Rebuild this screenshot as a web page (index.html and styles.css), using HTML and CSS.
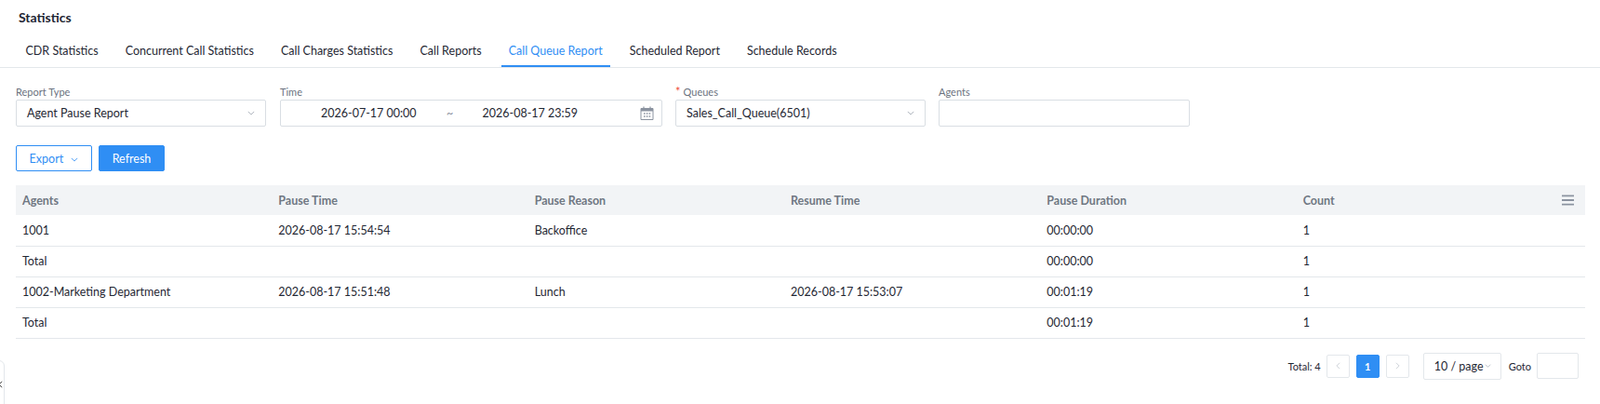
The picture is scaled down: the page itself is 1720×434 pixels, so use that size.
FILE: index.html
```html
<!DOCTYPE html>
<html lang="en">
<head>
  <meta charset="UTF-8">
  <title>Statistics</title>
  <link rel="stylesheet" href="styles.css">
</head>
<body>
  <h1 class="title">Statistics</h1>

  <nav class="tabs">
    <a class="tab">CDR Statistics</a>
    <a class="tab">Concurrent Call Statistics</a>
    <a class="tab">Call Charges Statistics</a>
    <a class="tab">Call Reports</a>
    <a class="tab active">Call Queue Report</a>
    <a class="tab">Scheduled Report</a>
    <a class="tab">Schedule Records</a>
  </nav>

  <main class="content">
    <div class="filters">
      <div class="field w-type">
        <label class="field-label">Report Type</label>
        <div class="control">
          <span class="value">Agent Pause Report</span>
          <svg class="caret" viewBox="0 0 10 6"><path d="M1 1l4 4 4-4"/></svg>
        </div>
      </div>
      <div class="field w-time">
        <label class="field-label">Time</label>
        <div class="control control-time">
          <span class="date">2026-07-17 00:00</span>
          <span class="tilde">~</span>
          <span class="date">2026-08-17 23:59</span>
          <svg class="calendar" viewBox="0 0 15 15">
            <path class="cal-body" d="M1 2.5h13v12h-13z"/>
            <path class="cal-top" d="M1 2.5h13v3h-13z"/>
            <path class="cal-pins" d="M4 0.5v3M11 0.5v3"/>
            <path class="cal-dots" d="M4 8h1.6M6.8 8h1.6M9.6 8h1.6M4 11h1.6M6.8 11h1.6M9.6 11h1.6"/>
          </svg>
        </div>
      </div>
      <div class="field w-queue">
        <label class="field-label"><span class="required">*</span>Queues</label>
        <div class="control">
          <span class="value">Sales_Call_Queue(6501)</span>
          <svg class="caret" viewBox="0 0 10 6"><path d="M1 1l4 4 4-4"/></svg>
        </div>
      </div>
      <div class="field w-agents">
        <label class="field-label">Agents</label>
        <div class="control"></div>
      </div>
    </div>

    <div class="actions">
      <button class="btn btn-outline">Export
        <svg class="caret caret-blue" viewBox="0 0 10 6"><path d="M1 1l4 4 4-4"/></svg>
      </button>
      <button class="btn btn-primary">Refresh</button>
    </div>

    <table class="report">
      <thead>
        <tr>
          <th>Agents</th>
          <th>Pause Time</th>
          <th>Pause Reason</th>
          <th>Resume Time</th>
          <th>Pause Duration</th>
          <th>Count</th>
          <th class="col-menu">
            <svg class="menu-icon" viewBox="0 0 14 12"><path d="M0 1h14M0 6h14M0 11h14"/></svg>
          </th>
        </tr>
      </thead>
      <tbody>
        <tr><td>1001</td><td>2026-08-17 15:54:54</td><td>Backoffice</td><td></td><td>00:00:00</td><td>1</td><td></td></tr>
        <tr><td>Total</td><td></td><td></td><td></td><td>00:00:00</td><td>1</td><td></td></tr>
        <tr><td>1002-Marketing Department</td><td>2026-08-17 15:51:48</td><td>Lunch</td><td>2026-08-17 15:53:07</td><td>00:01:19</td><td>1</td><td></td></tr>
        <tr><td>Total</td><td></td><td></td><td></td><td>00:01:19</td><td>1</td><td></td></tr>
      </tbody>
    </table>

    <div class="pagination">
      <span class="total">Total: 4</span>
      <span class="page-btn"><svg class="page-arrow" viewBox="0 0 6 10"><path d="M5 1L1 5l4 4"/></svg></span>
      <span class="page-btn current">1</span>
      <span class="page-btn"><svg class="page-arrow" viewBox="0 0 6 10"><path d="M1 1l4 4-4 4"/></svg></span>
      <span class="page-size">10 / page<svg class="caret caret-small" viewBox="0 0 10 6"><path d="M1 1l4 4 4-4"/></svg></span>
      <span class="goto">Goto</span>
      <span class="goto-input"></span>
    </div>
  </main>

  <div class="side-handle">
    <svg viewBox="0 0 6 10"><path d="M5 1L1 5l4 4"/></svg>
  </div>
</body>
</html>
```

FILE: styles.css
```css
html, body {
  height: 100%;
}

body {
  margin: 0;
  overflow: hidden;
  font-family: Lato, "Noto Sans", sans-serif;
  font-size: 12.5px;
  color: #1f2733;
  background-color: #fff;
}

.title {
  margin: 0;
  padding: 11px 20px 0;
  font-size: 14px;
  line-height: 16px;
  font-weight: 700;
}

.tabs {
  display: flex;
  gap: 13px;
  margin-top: 13px;
  padding-left: 19.5px;
  box-sizing: border-box;
  height: 33px;
  border-bottom: 1px solid #e3e7eb;
}

.tab {
  padding: 0 8px;
  line-height: 29px;
  height: 32px;
  box-sizing: border-box;
}

.tab.active {
  color: #2f8ef4;
  border-bottom: 2px solid #2f8ef4;
}

.content {
  padding: 0 16px 0 17px;
}

.filters {
  display: flex;
  gap: 14px;
  margin-top: 17px;
}

.field-label {
  display: block;
  height: 17px;
  font-size: 11px;
  line-height: 17px;
  color: #6b7280;
}

.required {
  color: #f0513c;
  font-size: 13px;
  margin-right: 3px;
}

.w-type { width: 270px; }
.w-time { width: 411px; }
.w-queue { width: 269px; }
.w-agents { width: 270px; }

.control {
  display: flex;
  align-items: center;
  justify-content: space-between;
  box-sizing: border-box;
  height: 29px;
  padding: 0 11px;
  border: 1px solid #d9dee3;
  border-radius: 2px;
}

.w-type .control {
  width: 269px;
}

.control-time {
  justify-content: flex-start;
  padding-left: 43px;
}

.date {
  width: 115px;
}

.tilde {
  width: 58.5px;
  padding-left: 20px;
  box-sizing: border-box;
  color: #8b93a0;
}

.caret {
  width: 8px;
  height: 5px;
  fill: none;
  stroke: #9aa2ad;
  stroke-width: 1;
}

.caret-blue {
  stroke: #2f8ef4;
  margin-left: 5px;
  vertical-align: 1px;
}

.calendar {
  width: 15px;
  height: 15px;
  margin-left: auto;
  margin-right: -3px;
  fill: none;
}

.cal-body {
  stroke: #8b93a0;
  stroke-width: 1;
}

.cal-top {
  fill: #8b93a0;
}

.cal-pins {
  stroke: #8b93a0;
  stroke-width: 1.2;
}

.cal-dots {
  stroke: #8b93a0;
  stroke-width: 1.4;
}

.actions {
  display: flex;
  gap: 7px;
  margin-top: 20px;
}

.btn {
  height: 28px;
  padding: 0;
  font-family: inherit;
  font-size: 12.5px;
  border-radius: 2px;
  box-sizing: border-box;
}

.btn-outline {
  width: 82px;
  color: #2f8ef4;
  background-color: #fff;
  border: 1px solid #2f8ef4;
}

.btn-primary {
  width: 71px;
  color: #fff;
  background-color: #2f8ef4;
  border: 1px solid #2f8ef4;
}

.report {
  width: 1687px;
  margin-top: 15px;
  border-collapse: collapse;
  table-layout: fixed;
}

.report th,
.report td {
  width: 275.3px;
  padding: 0 0 0 7px;
  text-align: left;
  box-sizing: border-box;
}

.report th {
  height: 32px;
  font-weight: 700;
  color: #6f7782;
  background-color: #f2f4f6;
}

.report td {
  height: 33px;
  border-bottom: 1px solid #e3e7eb;
}

.report .col-menu {
  width: 35px;
  padding: 0 0 0 10px;
}

.menu-icon {
  display: block;
  width: 13px;
  height: 12px;
  fill: none;
  stroke: #8b93a0;
  stroke-width: 2;
}

.pagination {
  display: flex;
  align-items: center;
  justify-content: flex-end;
  margin-top: 15px;
  padding-right: 7px;
  font-size: 11px;
}

.total {
  margin-right: 6px;
}

.page-btn {
  display: flex;
  align-items: center;
  justify-content: center;
  box-sizing: border-box;
  width: 25px;
  height: 25px;
  margin-right: 7px;
  border: 1px solid #e3e7eb;
  border-radius: 2px;
}

.page-btn.current {
  color: #fff;
  font-weight: 700;
  background-color: #2f8ef4;
  border-color: #2f8ef4;
}

.page-arrow {
  width: 5px;
  height: 8px;
  fill: none;
  stroke: #c4c9d0;
  stroke-width: 1;
}

.page-size {
  display: flex;
  align-items: center;
  box-sizing: border-box;
  width: 84px;
  height: 29px;
  margin-left: 8px;
  padding-left: 11px;
  font-size: 12.5px;
  border: 1px solid #e3e7eb;
  border-radius: 2px;
}

.caret-small {
  width: 7px;
  height: 4px;
  margin-left: 1px;
}

.goto {
  margin-left: 8px;
  margin-right: 6px;
}

.goto-input {
  box-sizing: border-box;
  width: 45px;
  height: 28px;
  border: 1px solid #e3e7eb;
  border-radius: 2px;
}

.side-handle {
  position: absolute;
  left: -12px;
  top: 387px;
  width: 17px;
  height: 60px;
  box-sizing: border-box;
  border: 1px solid #e3e7eb;
  border-radius: 6px;
  background-color: #fff;
}

.side-handle svg {
  position: absolute;
  left: 9px;
  top: 21px;
  width: 5px;
  height: 8px;
  fill: none;
  stroke: #333;
  stroke-width: 1.2;
}
```
